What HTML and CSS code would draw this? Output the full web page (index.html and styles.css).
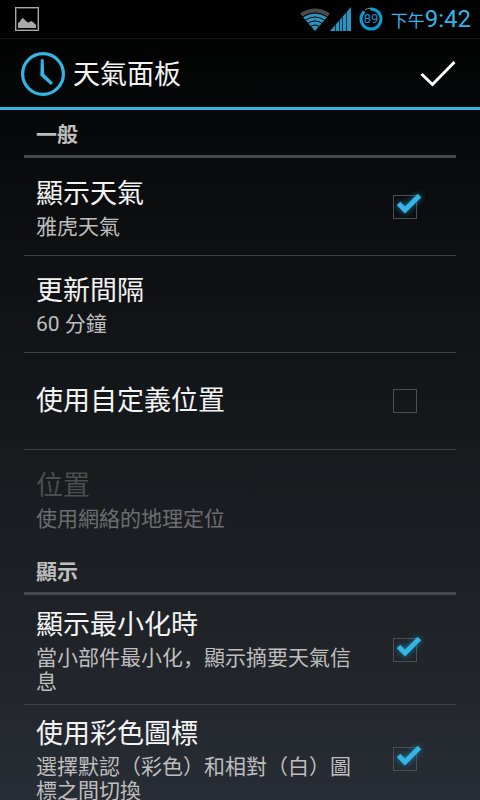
FILE: index.html
```html
<!DOCTYPE html>
<html lang="zh">
<head>
<meta charset="utf-8">
<meta name="viewport" content="width=device-width, initial-scale=1">
<title>天氣面板</title>
<link rel="stylesheet" href="styles.css">
</head>
<body>
<div class="status">
  <svg class="status-picture" width="24" height="24" viewBox="0 0 24 24" aria-hidden="true">
    <rect x="0.5" y="0.5" width="23" height="23" fill="none" stroke="#a9a9a9"/>
    <rect x="1.5" y="1.5" width="21" height="21" fill="none" stroke="#444"/>
    <path d="M3 21V16L5 14.5L6 12.5L8 11L10 13L12 15L14 15.5L16 14L18 15L21 18V21Z" fill="#a9a9a9"/>
  </svg>
  <svg class="status-wifi" width="30" height="23" viewBox="0 0 30 23" aria-hidden="true">
    <path d="M0 5.5Q15 -4.5 30 5.5L15 23Z" fill="#4a4a4a"/>
    <path d="M3.2 9.2Q15 2 26.8 9.2L15 23Z" fill="#2a93bf"/>
    <g fill="none" stroke="#000" stroke-width="1">
      <path d="M2.5 9Q15 .8 27.5 9"/>
      <path d="M5.5 12Q15 6 24.5 12"/>
      <path d="M8 15.2Q15 10.8 22 15.2"/>
      <path d="M10.5 18.3Q15 15.5 19.5 18.3"/>
    </g>
  </svg>
  <svg class="status-signal" width="21" height="24" viewBox="0 0 21 24" aria-hidden="true">
    <path d="M0 24L21 0V24Z" fill="#2a93bf"/>
    <path d="M5.5 18V24M9.5 13V24M12.5 9V24M16.5 5V24" stroke="#0a3245" stroke-width="1"/>
  </svg>
  <svg class="status-battery" width="24" height="24" viewBox="0 0 24 24" aria-hidden="true">
    <circle cx="12" cy="12" r="10" fill="none" stroke="#0d9ad0" stroke-width="3"/>
    <path d="M5.2 4.2A10 10 0 0 1 11 1.5" fill="none" stroke="#000" stroke-width="5"/>
    <path d="M6 2.8A11 11 0 0 1 11 1.2" fill="none" stroke="#8a8a8a" stroke-width="1"/>
    <text x="12" y="16" class="battery-text">89</text>
  </svg>
  <div class="clock"><span class="clock-half">下午</span>9:42</div>
</div>
<header class="bar">
  <svg width="44" height="44" viewBox="0 0 44 44" aria-hidden="true">
    <circle cx="22" cy="22" r="20.4" fill="none" stroke="#33b5e5" stroke-width="3.2"/>
    <path d="M19.8 7.2H22.6L23.2 22L32 30.8L29.8 33L19.3 23.5Z" fill="#33b5e5"/>
  </svg>
  <h1 class="bar-title">天氣面板</h1>
  <button class="done" type="button" aria-label="完成">
    <svg width="36" height="28" viewBox="0 0 36 28" aria-hidden="true">
      <path d="M1.5 14L12.5 24.5L34.5 2" fill="none" stroke="#fff" stroke-width="3"/>
    </svg>
  </button>
</header>
<main class="list">
  <h2 class="section">一般</h2>
  <label class="row">
    <span class="text"><span class="title">顯示天氣</span><span class="summary">雅虎天氣</span></span>
    <span class="widget"><input class="box" type="checkbox" checked><svg class="tick" width="24" height="20" viewBox="0 0 24 20" aria-hidden="true"><path d="M1.5 10.5L8 17L22.5 2.5"/></svg></span>
  </label>
  <button class="row" type="button">
    <span class="text"><span class="title">更新間隔</span><span class="summary">60 分鐘</span></span>
  </button>
  <label class="row">
    <span class="text"><span class="title">使用自定義位置</span></span>
    <span class="widget"><input class="box" type="checkbox"><svg class="tick" width="24" height="20" viewBox="0 0 24 20" aria-hidden="true"><path d="M1.5 10.5L8 17L22.5 2.5"/></svg></span>
  </label>
  <button class="row row-last" type="button" disabled>
    <span class="text"><span class="title">位置</span><span class="summary">使用網絡的地理定位</span></span>
  </button>
  <h2 class="section">顯示</h2>
  <label class="row">
    <span class="text"><span class="title">顯示最小化時</span><span class="summary">當小部件最小化，顯示摘要天氣信息</span></span>
    <span class="widget"><input class="box" type="checkbox" checked><svg class="tick" width="24" height="20" viewBox="0 0 24 20" aria-hidden="true"><path d="M1.5 10.5L8 17L22.5 2.5"/></svg></span>
  </label>
  <label class="row row-last">
    <span class="text"><span class="title">使用彩色圖標</span><span class="summary">選擇默認（彩色）和相對（白）圖標之間切換</span></span>
    <span class="widget"><input class="box" type="checkbox" checked><svg class="tick" width="24" height="20" viewBox="0 0 24 20" aria-hidden="true"><path d="M1.5 10.5L8 17L22.5 2.5"/></svg></span>
  </label>
</main>
</body>
</html>
```
FILE: styles.css
```css
* {
  box-sizing: border-box;
}

html {
  min-height: 100%;
  background: #000 linear-gradient(#000, #0d0f11 30%, #1e2226 75%, #282c34) fixed;
  scrollbar-width: none;
}

body {
  margin: 0;
  color: #f3f3f3;
  font-family: Roboto, "Noto Sans CJK SC", sans-serif;
}

svg {
  display: block;
  flex: none;
}

.status {
  display: flex;
  align-items: center;
  height: 39px;
  padding: 0 9px 0 15px;
  background: #000;
  border-bottom: 1px solid #131414;
}

.status-wifi {
  margin-left: auto;
}

.status-battery {
  margin: 0 8px;
}

.battery-text {
  fill: #1597cb;
  font-size: 13px;
  text-anchor: middle;
}

.clock {
  padding-top: 2px;
  color: #33b5e5;
  font-size: 24px;
  line-height: 36px;
}

.clock-half {
  font-size: 17px;
}

.bar {
  display: flex;
  align-items: center;
  height: 71px;
  padding: 2px 24px 0 21px;
  border-bottom: 3px solid #33b5e5;
}

.bar-title {
  margin: 0 auto 0 8px;
  padding-top: 2px;
  font-size: 27px;
  font-weight: 400;
  line-height: 36px;
}

.done {
  padding: 0;
  background: none;
  border: 0;
}

.list {
  padding: 0 24px;
}

.section {
  height: 48px;
  margin: 0 0 1px;
  padding: 10px 12px 0;
  border-bottom: 3px solid #45484b;
  color: #bebebe;
  font-size: 21px;
  font-weight: 700;
  line-height: 30px;
}

.row {
  display: flex;
  align-items: center;
  width: 100%;
  min-height: 97px;
  padding: 10px 12px;
  background: none;
  border: 0;
  border-bottom: 1px solid #3c4043;
  color: inherit;
  font-family: inherit;
  text-align: left;
}

.row-last {
  border-bottom: 0;
}

.text {
  display: flex;
  flex: 1;
  flex-direction: column;
  gap: 2px;
}

.title {
  font-size: 27px;
  line-height: 38px;
}

.summary {
  color: #bebebe;
  font-size: 21px;
  line-height: 24px;
}

.row:disabled .title {
  color: #4c4c4c;
}

.row:disabled .summary {
  color: #6c6d70;
}

.widget {
  position: relative;
  display: flex;
  justify-content: center;
  width: 78px;
}

.box {
  width: 24px;
  height: 24px;
  margin: 0;
  appearance: none;
  border: 1px solid #4c4f51;
}

.tick {
  position: absolute;
  top: -2px;
  left: 31px;
  display: none;
  overflow: visible;
  fill: none;
  stroke: #33b5e5;
  stroke-width: 5;
  filter: drop-shadow(0 0 3px #1c7fa6);
}

.box:checked + .tick {
  display: block;
}
```
